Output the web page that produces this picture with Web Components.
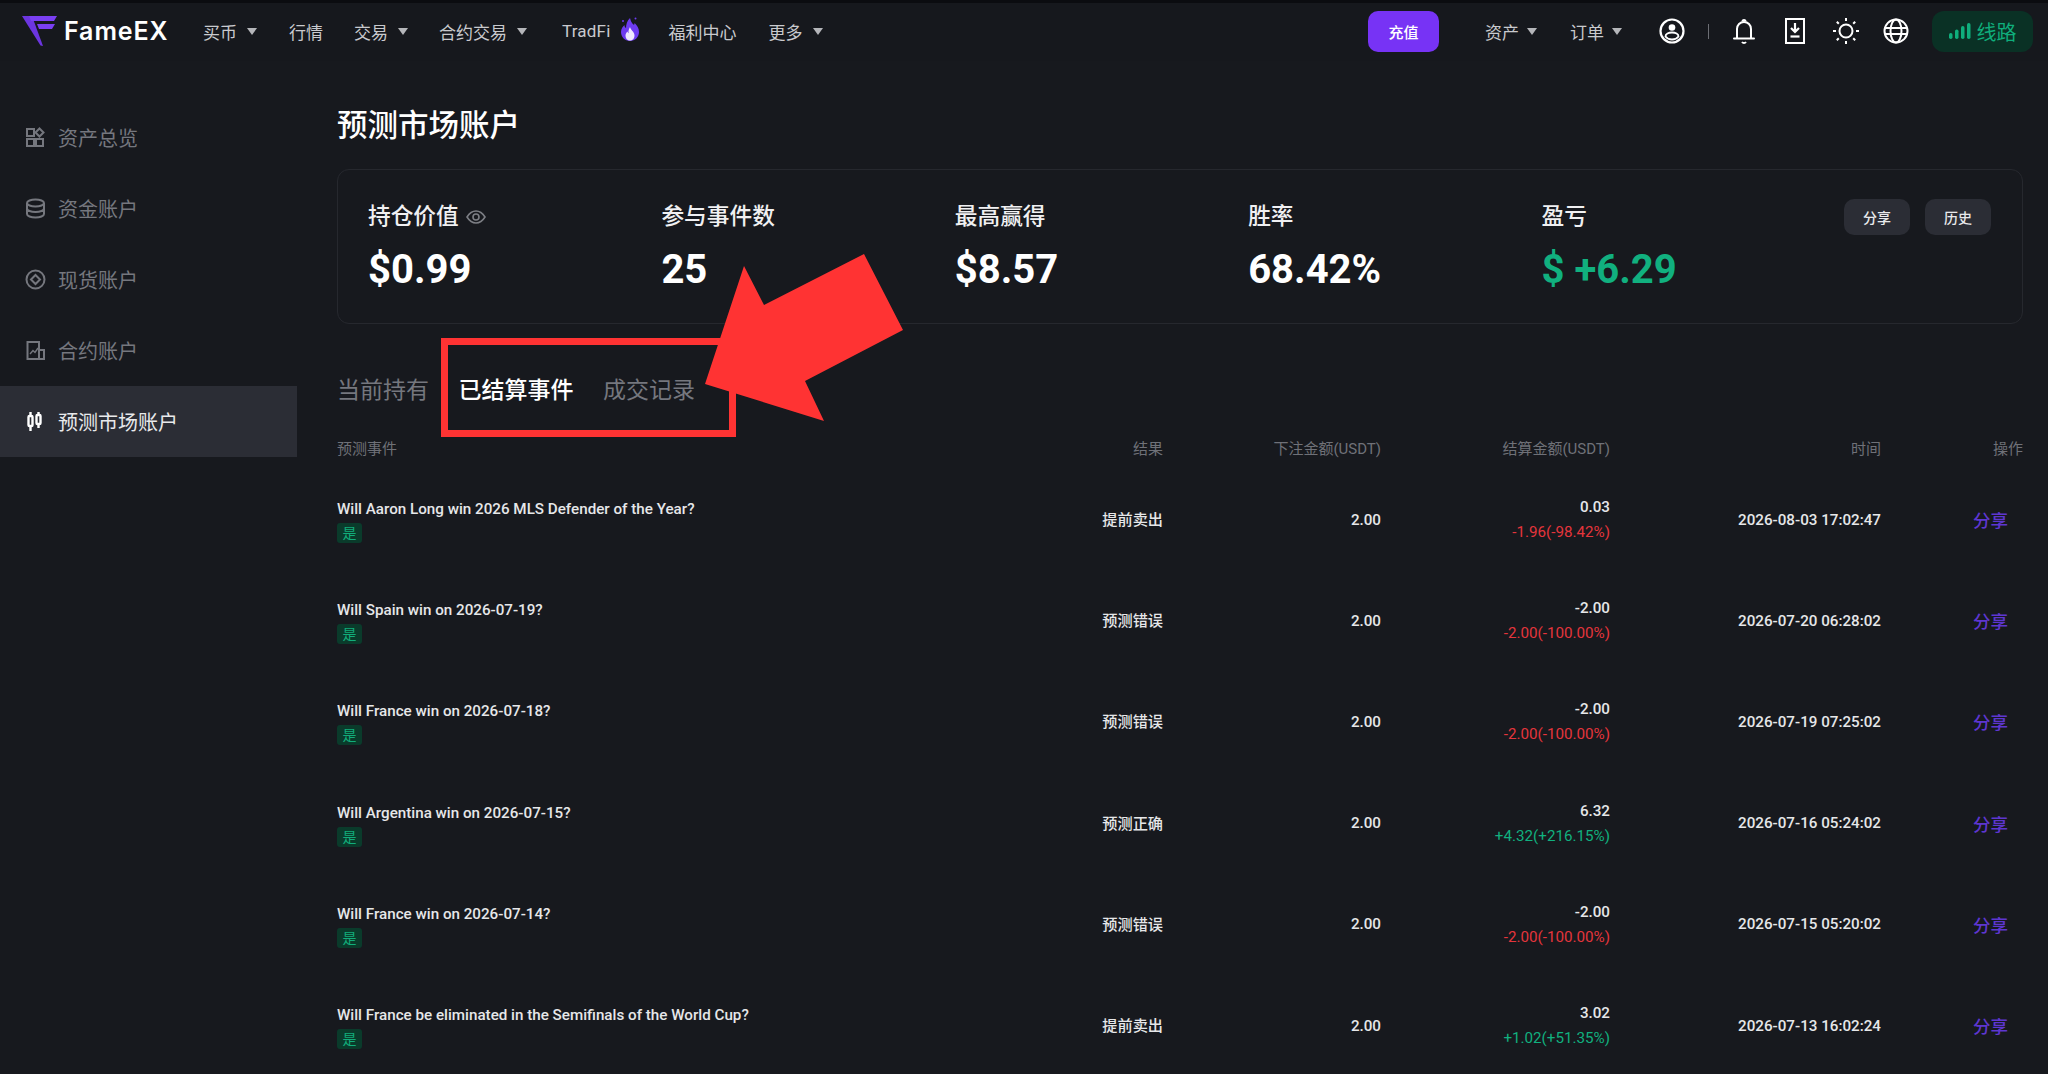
<!DOCTYPE html>
<html lang="zh">
<head>
<meta charset="utf-8">
<title>FameEX</title>
<style>
  html, body { margin: 0; height: 100%; background: #17191e; overflow: hidden; }
  body { font-family: Roboto, "Noto Sans CJK SC", sans-serif; color: #fff; }
</style>
</head>
<body>
<fx-app>
  <fx-header slot="top"></fx-header>
  <fx-sidebar slot="side">
    <fx-side-item icon="grid">资产总览</fx-side-item>
    <fx-side-item icon="stack">资金账户</fx-side-item>
    <fx-side-item icon="coin">现货账户</fx-side-item>
    <fx-side-item icon="chart">合约账户</fx-side-item>
    <fx-side-item icon="candle" active>预测市场账户</fx-side-item>
  </fx-sidebar>
  <fx-main>
    <fx-stat-card>
      <fx-stat label="持仓价值" value="$0.99" eye></fx-stat>
      <fx-stat label="参与事件数" value="25"></fx-stat>
      <fx-stat label="最高赢得" value="$8.57"></fx-stat>
      <fx-stat label="胜率" value="68.42%"></fx-stat>
      <fx-stat label="盈亏" value="$ +6.29" up></fx-stat>
    </fx-stat-card>
    <fx-tabs></fx-tabs>
    <fx-table></fx-table>
  </fx-main>
  <fx-annotation></fx-annotation>
</fx-app>

<script>
(function () {
  const rows = [
    ["Will Aaron Long win 2026 MLS Defender of the Year?", "提前卖出", "0.03", "-1.96(-98.42%)", "2026-08-03 17:02:47"],
    ["Will Spain win on 2026-07-19?", "预测错误", "-2.00", "-2.00(-100.00%)", "2026-07-20 06:28:02"],
    ["Will France win on 2026-07-18?", "预测错误", "-2.00", "-2.00(-100.00%)", "2026-07-19 07:25:02"],
    ["Will Argentina win on 2026-07-15?", "预测正确", "6.32", "+4.32(+216.15%)", "2026-07-16 05:24:02"],
    ["Will France win on 2026-07-14?", "预测错误", "-2.00", "-2.00(-100.00%)", "2026-07-15 05:20:02"],
    ["Will France be eliminated in the Semifinals of the World Cup?", "提前卖出", "3.02", "+1.02(+51.35%)", "2026-07-13 16:02:24"],
  ];

  const sideIcons = {
    grid: '<rect x="2" y="2" width="7" height="7"/><path d="M14.5 1.5l4 4-4 4-4-4z"/><rect x="2" y="12" width="7" height="7"/><rect x="11" y="12" width="7" height="7"/>',
    stack: '<ellipse cx="10.5" cy="5" rx="8.5" ry="3.5"/><path d="M2 5v11c0 2 3.8 3.5 8.5 3.5S19 18 19 16V5M2 10.5c0 2 3.8 3.5 8.5 3.5S19 12.5 19 10.5"/>',
    coin: '<circle cx="10.5" cy="10.5" r="9"/><path d="M10.5 6l4.5 4.5-4.5 4.5L6 10.5z"/>',
    chart: '<path d="M2.5 2h11.5v17H2.5zM14 10h5v9h-5"/><path d="M5 14l3-3.5 2 2 3-4.5" stroke-width="1.4"/>',
    candle: '<g stroke="#fff" stroke-width="2.4"><path d="M5.5 1v4M5.5 15v5M13.5 1v3M13.5 13v4"/><rect x="3.5" y="5" width="4" height="10" rx="1"/><rect x="11.500" y="4" width="4" height="9" rx="1"/></g>',
  };

  class FxApp extends HTMLElement {
    constructor() {
      super();
      this.attachShadow({ mode: "open" }).innerHTML = `
        <style>
          :host { display: block; position: relative; width: 2048px; height: 1074px; overflow: hidden; }
          .body { display: flex; align-items: flex-start; }
        </style>
        <slot name="top"></slot>
        <div class="body"><slot name="side"></slot><slot></slot></div>`;
    }
  }

  class FxHeader extends HTMLElement {
    constructor() {
      super();
      const caret = '<i class="caret"></i>';
      this.attachShadow({ mode: "open" }).innerHTML = `
        <style>
          :host { display: flex; align-items: center; box-sizing: border-box; height: 61px; border-top: 3px solid #0b0c10;
            background: #16181d; padding: 0 15px 2px 0; font-size: 17px; color: #c9cace; }
          .logo { display: flex; align-items: center; margin-left: 22px; width: 181px; }
          .logo span { font: 600 25px Inter, sans-serif; letter-spacing: .9px; color: #fff; margin-left: 6px; }
          nav { display: flex; align-items: center; gap: 31px; }
          .it { display: flex; align-items: center; gap: 10px; white-space: nowrap; }
          .first { margin-right: 1px; }
          .tf { margin-left: 4px; letter-spacing: .2px; }
          .caret { width: 0; height: 0; border: 5px solid transparent; border-top: 7px solid #b5b6ba; border-bottom: 0; }
          .flame { margin: -4px -2px 0 -1px; }
          .more { margin-left: 1px; }
          .spacer { flex: 1; }
          .pay { width: 71px; height: 41px; border-radius: 10px; background: #7733f5; color: #fff; font-size: 15px; font-weight: 500;
            display: flex; align-items: center; justify-content: center; margin-right: 46px; }
          .acc { display: flex; gap: 33px; margin-right: 37px; }
          .acc .it { gap: 8px; }
          .icons { display: flex; align-items: center; }
          .icons svg { display: block; fill: none; stroke: #fff; stroke-width: 2; }
          .sep { width: 1px; height: 15px; background: #6c6e74; margin: 0 24px 0 23px; }
          .line { width: 101px; height: 41px; margin-left: 23px; border-radius: 12px; background: #0a3125; color: #0fae7c;
            font-size: 20px; display: flex; align-items: center; justify-content: center; gap: 5px; }
        </style>
        <div class="logo">
          <svg width="36" height="32" viewBox="0 0 36 32">
            <path d="M0 1h10l11 30-2.5-.5z" fill="#6c35e0"/>
            <path d="M7 1h28l-3 5H9zM15 9h18l-3 5H17z" fill="#7a3ff2"/>
          </svg>
          <span>FameEX</span>
        </div>
        <nav>
          <div class="it first">买币${caret}</div>
          <div class="it">行情</div>
          <div class="it">交易${caret}</div>
          <div class="it">合约交易${caret}</div>
          <div class="it tf">TradFi
            <svg class="flame" width="20" height="26" viewBox="0 0 20 26">
              <path d="M10 2c1 4 2 5 4 7 .5-1 .6-2 .6-2 2.5 2.5 4.4 5 4.4 9C19 21 15 25 10 25S1 21 1 16c0-3.500 2-5.500 3.500-7 0 1.500.5 2.500 1.500 3C6 8.500 7 5 10 2z" fill="#6d3bf0"/>
              <path d="M10 11c.5 3 4.500 4.500 4.500 8.500 0 3-2 5-4.500 5s-4.500-2-4.500-5c0-2 1-3 2-4 .3 1 .7 1.500 1.200 1.800C8 15 9 13 10 11z" fill="#efe9ff"/>
              <circle cx="15.500" cy="2.500" r="1" fill="#6d3bf0"/><circle cx="3" cy="5" r="1" fill="#6d3bf0"/>
            </svg>
          </div>
          <div class="it">福利中心</div>
          <div class="it more">更多${caret}</div>
        </nav>
        <div class="spacer"></div>
        <div class="pay">充值</div>
        <div class="acc">
          <div class="it">资产${caret}</div>
          <div class="it">订单${caret}</div>
        </div>
        <div class="icons">
          <svg width="26" height="26" viewBox="0 0 26 26" style="stroke-width:2.2">
            <circle cx="13" cy="13" r="11.5"/>
            <circle cx="13" cy="9.5" r="3.3" fill="#fff" stroke="none"/>
            <path d="M6.5 18.5c0-2.5 3-4 6.5-4s6.5 1.5 6.5 4c-1.5 2-4 3-6.5 3s-5-1-6.5-3z" stroke-width="1.8"/>
          </svg>
          <div class="sep"></div>
          <svg width="22" height="26" viewBox="0 0 22 26" style="margin-right:30px">
            <path d="M4 20V11c0-4 3-7 7-7s7 3 7 7v9M1 20.5h20" stroke-linecap="round"/>
            <path d="M9.5 3.5c0-2 3-2 3 0M9 24c1 1.3 3 1.3 4 0" />
          </svg>
          <svg width="20" height="26" viewBox="0 0 20 26" style="margin-right:28px">
            <rect x="1" y="1" width="18" height="24" />
            <path d="M10 5v8M6 10l4 4 4-4" stroke-width="2.2"/>
            <path d="M5.5 18.5h9" stroke-width="2.2"/>
          </svg>
          <svg width="26" height="26" viewBox="0 0 26 26" style="margin-right:24px">
            <circle cx="13" cy="13" r="6.5"/>
            <path d="M13 0v3M13 23v3M0 13h3M23 13h3M3.8 3.8l2 2M20.2 20.2l2 2M3.8 22.2l2-2M20.2 5.8l2-2" stroke-width="2"/>
          </svg>
          <svg width="26" height="26" viewBox="0 0 26 26">
            <circle cx="13" cy="13" r="11.5"/>
            <ellipse cx="13" cy="13" rx="5.5" ry="11.5"/>
            <path d="M1.5 10h23M1.5 16h23"/>
          </svg>
          <div class="line">
            <svg width="23" height="18" viewBox="0 0 23 18" style="stroke:none;fill:#0fae7c">
              <rect x="0" y="11" width="3.5" height="6" rx="1.7"/>
              <rect x="6" y="7.5" width="3.5" height="9.5" rx="1.7"/>
              <rect x="12" y="4" width="3.5" height="13" rx="1.7"/>
              <rect x="18" y="1" width="3.5" height="16" rx="1.7"/>
            </svg>
            线路
          </div>
        </div>`;
    }
  }

  class FxSidebar extends HTMLElement {
    constructor() {
      super();
      this.attachShadow({ mode: "open" }).innerHTML = `
        <style>:host { display: block; flex: 0 0 297px; padding-top: 41px; }</style><slot></slot>`;
    }
  }

  class FxSideItem extends HTMLElement {
    connectedCallback() {
      if (this.shadowRoot) return;
      const name = this.getAttribute("icon");
      this.attachShadow({ mode: "open" }).innerHTML = `
        <style>
          :host { display: flex; align-items: center; height: 71px; padding-left: 25px; font-size: 20px; color: #75777e; }
          :host([active]) { background: #2b2d35; color: #e8e9eb; }
          svg { fill: none; stroke: #75777e; stroke-width: 2; margin-right: 12px; flex: none; }
        </style>
        <svg width="21" height="21" viewBox="0 0 21 21">${sideIcons[name]}</svg><slot></slot>`;
    }
  }

  class FxMain extends HTMLElement {
    constructor() {
      super();
      this.attachShadow({ mode: "open" }).innerHTML = `
        <style>
          :host { display: block; flex: 1; padding: 45px 25px 0 40px; min-width: 0; }
          h1 { margin: 0 0 23px; font-size: 30.5px; line-height: 40px; font-weight: 500; color: #fff; }
        </style>
        <h1>预测市场账户</h1>
        <slot></slot>`;
    }
  }

  class FxStatCard extends HTMLElement {
    constructor() {
      super();
      this.attachShadow({ mode: "open" }).innerHTML = `
        <style>
          :host { display: flex; box-sizing: border-box; height: 155px; border: 1px solid #26282e; border-radius: 12px; padding: 27px 31px 0 30px; }
          .stats { flex: 1; display: grid; grid-template-columns: repeat(5, 293.4px); align-content: start; }
          .btns { display: flex; gap: 15px; margin-top: 2px; align-self: flex-start; }
          button { width: 66px; height: 36px; border: 0; border-radius: 10px; background: #2b2d35; color: #e8e9eb; font: 500 14px Roboto, "Noto Sans CJK SC", sans-serif; padding: 0; }
        </style>
        <div class="stats"><slot></slot></div>
        <div class="btns"><button>分享</button><button>历史</button></div>`;
    }
  }

  class FxStat extends HTMLElement {
    connectedCallback() {
      if (this.shadowRoot) return;
      const eye = this.hasAttribute("eye")
        ? '<svg width="20" height="14" viewBox="0 0 20 14"><path d="M1 7c2.5-4 5.5-6 9-6s6.5 2 9 6c-2.5 4-5.5 6-9 6S3.5 11 1 7z"/><circle cx="10" cy="7" r="3"/></svg>'
        : "";
      this.attachShadow({ mode: "open" }).innerHTML = `
        <style>
          :host { display: block; }
          .l { display: flex; align-items: center; gap: 7px; height: 34px; font-size: 22.7px; font-weight: 500; color: #f0f0f2; }
          svg { fill: none; stroke: #7c7e84; stroke-width: 1.6; margin-top: 6px; }
          .v { margin-top: 15px; font-size: 40px; line-height: 48px; font-weight: 700; color: #fff; }
          :host([up]) .v { color: #11b07f; }
        </style>
        <div class="l"><span></span>${eye}</div>
        <div class="v"></div>`;
      this.shadowRoot.querySelector("span").textContent = this.getAttribute("label");
      this.shadowRoot.querySelector(".v").textContent = this.getAttribute("value");
    }
  }

  class FxTabs extends HTMLElement {
    constructor() {
      super();
      this.attachShadow({ mode: "open" }).innerHTML = `
        <style>
          :host { display: flex; gap: 29.5px; height: 44px; margin-top: 42px; align-items: center; font-size: 23px; color: #75777e; }
          .on { color: #fff; font-weight: 500; }
        </style>
        <div>当前持有</div><div class="on">已结算事件</div><div>成交记录</div>`;
    }
  }

  const COLS = "grid-template-columns: 726px 100px 218px 229px 271px 142px;";

  class FxTable extends HTMLElement {
    constructor() {
      super();
      this.attachShadow({ mode: "open" }).innerHTML = `
        <style>
          :host { display: block; margin-top: 16px; }
          .head { display: grid; ${COLS} height: 42px; margin-bottom: 1px; align-items: center; font-size: 15px; color: #6f7178; text-align: right; }
          .head div:first-child { text-align: left; }
        </style>
        <div class="head"><div>预测事件</div><div>结果</div><div>下注金额(USDT)</div><div>结算金额(USDT)</div><div>时间</div><div>操作</div></div>
        <div class="rows"></div>`;
      const box = this.shadowRoot.querySelector(".rows");
      rows.forEach((r) => {
        const row = document.createElement("fx-row");
        ["title", "result", "settle", "pnl", "time"].forEach((k, i) => row.setAttribute(k, r[i]));
        box.appendChild(row);
      });
    }
  }

  class FxRow extends HTMLElement {
    connectedCallback() {
      if (this.shadowRoot) return;
      this.attachShadow({ mode: "open" }).innerHTML = `
        <style>
          :host { display: grid; ${COLS} height: 101.2px; align-items: center; font-size: 15.2px; font-weight: 500; color: #e6e7e9; text-align: right; }
          .ev { text-align: left; padding-top: 3px; }
          .t { line-height: 20px; }
          .tag { display: block; width: 25px; height: 20px; margin-top: 4px; border-radius: 3px; background: #0a3b2b; color: #12ad7b;
            font-size: 14px; font-weight: 400; line-height: 20px; text-align: center; }
          .result { margin-top: -3px; }
          .s { line-height: 20px; }
          .p { line-height: 20px; margin-top: 5px; font-weight: 400; color: #e5353c; }
          .p.up { color: #11b07f; }
          .share { color: #5e36d0; font-size: 17.5px; font-weight: 500; padding-right: 15px; }
        </style>
        <div class="ev"><div class="t"></div><span class="tag">是</span></div>
        <div class="result"></div>
        <div>2.00</div>
        <div><div class="s"></div><div class="p"></div></div>
        <div class="time"></div>
        <div class="share">分享</div>`;
      const q = (s) => this.shadowRoot.querySelector(s);
      q(".t").textContent = this.getAttribute("title");
      q(".result").textContent = this.getAttribute("result");
      q(".s").textContent = this.getAttribute("settle");
      q(".p").textContent = this.getAttribute("pnl");
      q(".time").textContent = this.getAttribute("time");
      if (this.getAttribute("pnl").startsWith("+")) q(".p").classList.add("up");
      this.removeAttribute("title");
    }
  }

  // red box and arrow drawn over the screenshot
  class FxAnnotation extends HTMLElement {
    constructor() {
      super();
      this.attachShadow({ mode: "open" }).innerHTML = `
        <style>
          :host { position: absolute; inset: 0; display: block; pointer-events: none; }
          .box { position: absolute; left: 441px; top: 338px; width: 295px; height: 99px; box-sizing: border-box; border: 7px solid #ff3333; }
          svg { position: absolute; left: 0; top: 0; }
        </style>
        <div class="box"></div>
        <svg width="2048" height="1074"><polygon points="744,266 764,305 864,254 903,330 805,381 824,421 705,384" fill="#ff3333"/></svg>`;
    }
  }

  customElements.define("fx-app", FxApp);
  customElements.define("fx-header", FxHeader);
  customElements.define("fx-sidebar", FxSidebar);
  customElements.define("fx-side-item", FxSideItem);
  customElements.define("fx-main", FxMain);
  customElements.define("fx-stat-card", FxStatCard);
  customElements.define("fx-stat", FxStat);
  customElements.define("fx-tabs", FxTabs);
  customElements.define("fx-row", FxRow);
  customElements.define("fx-table", FxTable);
  customElements.define("fx-annotation", FxAnnotation);
})();
</script>
</body>
</html>
